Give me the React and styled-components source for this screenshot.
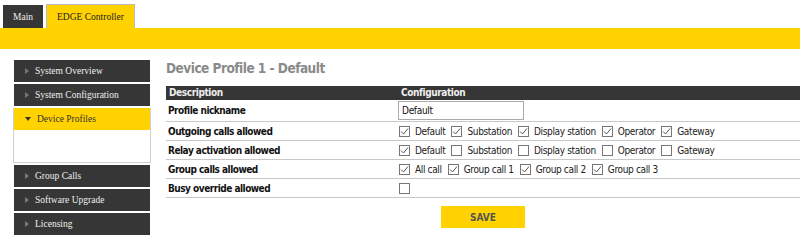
import React, { useState } from "react";
import styled, { createGlobalStyle } from "styled-components";

const GlobalStyle = createGlobalStyle`
  html, body {
    margin: 0;
    padding: 0;
    background: #fff;
  }
  body {
    font-family: "Liberation Serif", serif;
  }
`;

const Yellow = "#ffd200";
const Dark = "#363636";
const Narrow = `"DejaVu Sans Condensed", Roboto, sans-serif`;

const Page = styled.div`
  width: 800px;
  height: 243px;
  overflow: hidden;
`;

const TabBar = styled.div`
  display: flex;
  align-items: flex-end;
  gap: 3px;
  padding: 4px 0 0 3px;
  height: 24px;
`;

const Tab = styled.div`
  height: ${(p) => (p.active ? "24px" : "23px")};
  box-sizing: border-box;
  padding: 0 ${(p) => (p.active ? "10px" : "9px")};
  display: flex;
  align-items: center;
  font-size: 9.5px;
  background: ${(p) => (p.active ? Yellow : Dark)};
  color: ${(p) => (p.active ? "#222" : "#eee")};
  border: 1px solid ${(p) => (p.active ? "#bbb" : Dark)};
  border-bottom: none;
`;

const Banner = styled.div`
  height: 21px;
  background: ${Yellow};
`;

const Body = styled.div`
  display: flex;
  padding: 11px 0 0 14px;
`;

const Sidebar = styled.div`
  width: 136px;
  display: flex;
  flex-direction: column;
  gap: 2px;
`;

const NavItem = styled.div`
  height: 22px;
  display: flex;
  align-items: center;
  gap: 6px;
  padding-left: 11px;
  font-size: 9.5px;
  background: ${(p) => (p.open ? Yellow : Dark)};
  color: ${(p) => (p.open ? "#333" : "#eee")};
`;

const Arrow = styled.span`
  width: 0;
  height: 0;
  border-style: solid;
  ${(p) =>
    p.open
      ? `border-width: 4px 3px 0 3px; border-color: #333 transparent transparent transparent;`
      : `border-width: 3px 0 3px 4px; border-color: transparent transparent transparent #777;`}
`;

const OpenGroup = styled.div`
  border: 1px solid #d0d0d0;
  border-top: none;
  display: flex;
  flex-direction: column;
  margin: 0 -1px;
`;

const SubArea = styled.div`
  height: 32px;
  background: #fff;
`;

const Content = styled.div`
  flex: 1;
  padding-left: 16px;
  font-family: ${Narrow};
`;

const Title = styled.h1`
  margin: 0;
  height: 26px;
  font-size: 13.5px;
  letter-spacing: -0.5px;
  font-weight: bold;
  color: #8a8a8a;
  line-height: 17px;
`;

const Table = styled.div`
  display: grid;
  grid-template-columns: 232px 1fr;
`;

const HeadCell = styled.div`
  background: ${Dark};
  color: #eee;
  font-weight: bold;
  font-size: 10px;
  letter-spacing: -0.4px;
  height: 14px;
  line-height: 14px;
  padding-left: 3px;
`;

const Label = styled.div`
  font-size: 10px;
  font-weight: bold;
  letter-spacing: -0.5px;
  color: #111;
  padding-left: 2px;
  display: flex;
  align-items: center;
  height: ${(p) => p.h || 18}px;
  border-bottom: 1px solid #c8c8c8;
`;

const Value = styled.div`
  font-size: 10px;
  letter-spacing: -0.35px;
  color: #222;
  display: flex;
  align-items: center;
  gap: 6px;
  height: ${(p) => p.h || 18}px;
  border-bottom: 1px solid #c8c8c8;
  padding-left: 1px;
`;

const TextInput = styled.input`
  width: 126px;
  height: 19px;
  box-sizing: border-box;
  border: 1px solid #aaa;
  font-family: ${Narrow};
  font-size: 10px;
  letter-spacing: -0.3px;
  padding: 0 3px;
  margin: 0 0 0 -1px;
  outline: none;
  color: #111;
`;

const CheckBox = styled.span`
  width: 11px;
  height: 11px;
  box-sizing: border-box;
  border: 1px solid #777;
  background: #fff;
  display: inline-flex;
  align-items: center;
  justify-content: center;
  flex: none;
`;

const Option = styled.label`
  display: inline-flex;
  align-items: center;
  gap: 5px;
`;

const Actions = styled.div`
  display: flex;
  padding: 8px 0 0 275px;
`;

const SaveButton = styled.button`
  width: 84px;
  height: 22px;
  border: none;
  background: ${Yellow};
  color: #555;
  font-family: ${Narrow};
  font-weight: bold;
  font-size: 10px;
`;

function Check({ on }) {
  return (
    <CheckBox>
      {on && (
        <svg width="9" height="9" viewBox="0 0 9 9">
          <path d="M1 4.5 L3.5 7 L8 1.5" fill="none" stroke="#555" strokeWidth="1" />
        </svg>
      )}
    </CheckBox>
  );
}

function Options({ items }) {
  return items.map(([name, on]) => (
    <Option key={name}>
      <Check on={on} />
      {name}
    </Option>
  ));
}

const navTop = ["System Overview", "System Configuration"];
const navBottom = ["Group Calls", "Software Upgrade", "Licensing"];

export default function App() {
  const [nickname, setNickname] = useState("Default");

  return (
    <Page>
      <GlobalStyle />
      <TabBar>
        <Tab>Main</Tab>
        <Tab active>EDGE Controller</Tab>
      </TabBar>
      <Banner />
      <Body>
        <Sidebar>
          {navTop.map((n) => (
            <NavItem key={n}>
              <Arrow />
              {n}
            </NavItem>
          ))}
          <OpenGroup>
            <NavItem open>
              <Arrow open />
              Device Profiles
            </NavItem>
            <SubArea />
          </OpenGroup>
          {navBottom.map((n) => (
            <NavItem key={n}>
              <Arrow />
              {n}
            </NavItem>
          ))}
        </Sidebar>
        <Content>
          <Title>Device Profile 1 - Default</Title>
          <Table>
            <HeadCell>Description</HeadCell>
            <HeadCell>Configuration</HeadCell>
            <Label h={21}>Profile nickname</Label>
            <Value h={21}>
              <TextInput value={nickname} onChange={(e) => setNickname(e.target.value)} />
            </Value>
            <Label>Outgoing calls allowed</Label>
            <Value>
              <Options
                items={[
                  ["Default", true],
                  ["Substation", true],
                  ["Display station", true],
                  ["Operator", true],
                  ["Gateway", true],
                ]}
              />
            </Value>
            <Label>Relay activation allowed</Label>
            <Value>
              <Options
                items={[
                  ["Default", true],
                  ["Substation", false],
                  ["Display station", false],
                  ["Operator", false],
                  ["Gateway", false],
                ]}
              />
            </Value>
            <Label>Group calls allowed</Label>
            <Value>
              <Options
                items={[
                  ["All call", true],
                  ["Group call 1", true],
                  ["Group call 2", true],
                  ["Group call 3", true],
                ]}
              />
            </Value>
            <Label>Busy override allowed</Label>
            <Value>
              <Check />
            </Value>
          </Table>
          <Actions>
            <SaveButton>SAVE</SaveButton>
          </Actions>
        </Content>
      </Body>
    </Page>
  );
}
